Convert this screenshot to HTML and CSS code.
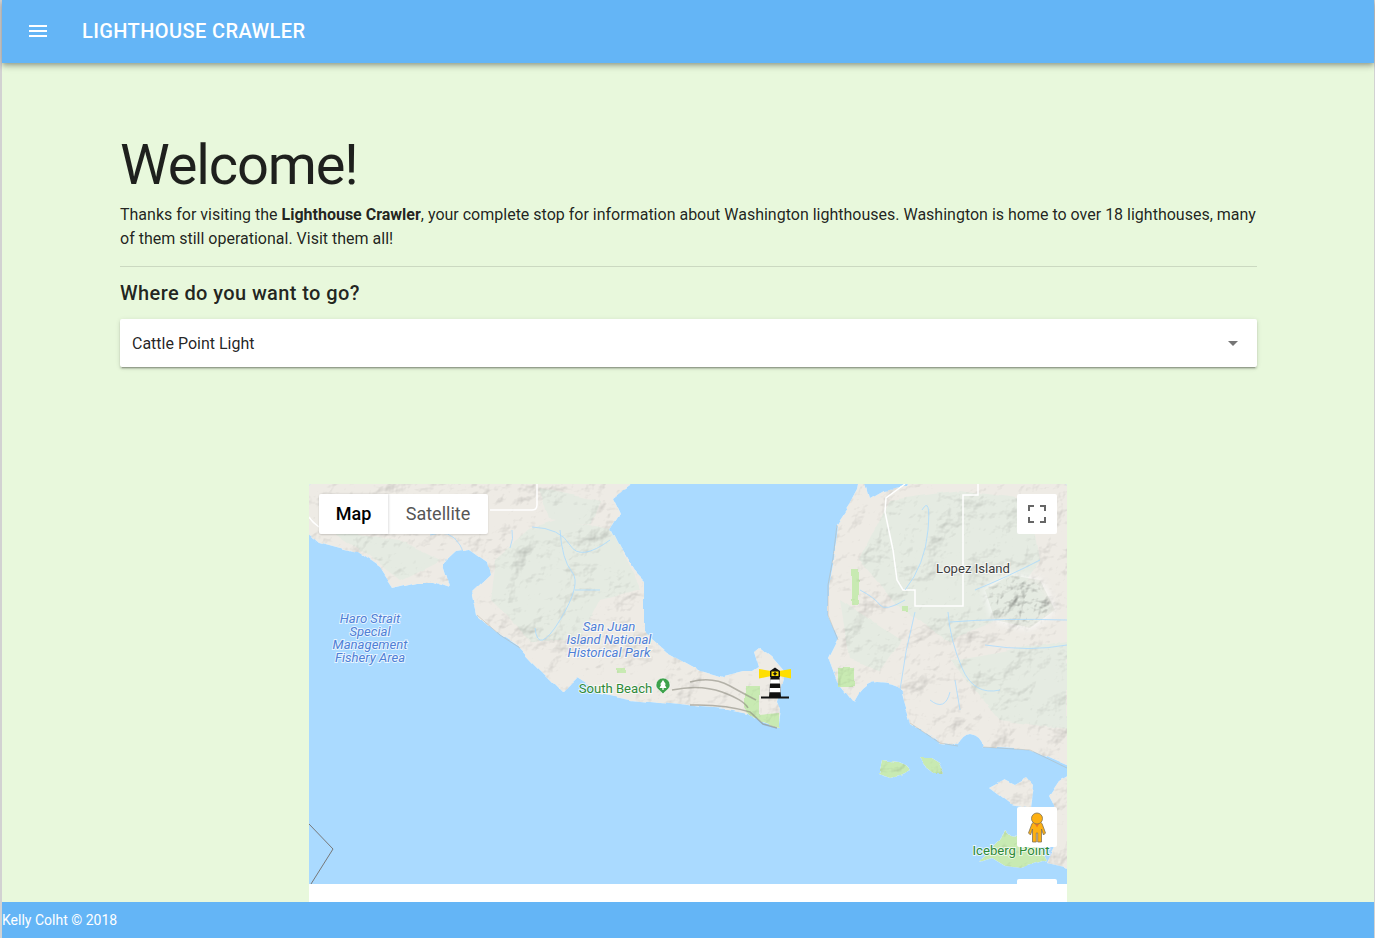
FILE: index.html
```html
<!DOCTYPE html>
<html lang="en">
  <head>
    <meta charset="UTF-8" />
    <meta name="viewport" content="width=device-width, initial-scale=1.0" />
    <title>Lighthouse Crawler</title>
    <link rel="stylesheet" href="styles.css">
  </head>
  <body>
    <div class="app">
      <header class="toolbar">
        <button class="menu-btn" type="button" aria-label="Menu">
          <svg viewBox="0 0 24 24" width="24" height="24"><path d="M3 18h18v-2H3v2zm0-5h18v-2H3v2zm0-7v2h18V6H3z" fill="#fff"/></svg>
        </button>
        <div class="toolbar-title">Lighthouse Crawler</div>
      </header>

      <main class="content">
        <h1>Welcome!</h1>
        <p class="intro">Thanks for visiting the <strong>Lighthouse Crawler</strong>, your complete stop for information about Washington lighthouses. Washington is home to over 18 lighthouses, many of them still operational. Visit them all!</p>
        <hr class="divider" />
        <h2>Where do you want to go?</h2>
        <div class="select-box">
          <span>Cattle Point Light</span>
          <svg viewBox="0 0 24 24" width="24" height="24"><path d="M7 10l5 5 5-5z" fill="#757575"/></svg>
        </div>

        <div class="map">
          <svg class="map-art" viewBox="309 484 758 400" width="758" height="400">
            <defs>
              <filter id="relief" x="-5%" y="-5%" width="110%" height="110%" color-interpolation-filters="sRGB">
                <feTurbulence type="fractalNoise" baseFrequency=".025" numOctaves="5" seed="11" result="noise"/>
                <feDisplacementMap in="SourceGraphic" in2="noise" scale="7" xChannelSelector="R" yChannelSelector="G" result="shape"/>
                <feDiffuseLighting in="noise" surfaceScale="2.6" diffuseConstant="1.12" lighting-color="#fff" result="light">
                  <feDistantLight azimuth="235" elevation="65"/>
                </feDiffuseLighting>
                <feBlend in="shape" in2="light" mode="multiply" result="lit"/>
                <feComposite in="lit" in2="shape" operator="in"/>
              </filter>
              <filter id="rugged" x="-20%" y="-20%" width="140%" height="140%" color-interpolation-filters="sRGB">
                <feTurbulence type="fractalNoise" baseFrequency=".06" numOctaves="4" seed="4" result="noise"/>
                <feDiffuseLighting in="noise" surfaceScale="3" diffuseConstant="1.1" lighting-color="#fff" result="light">
                  <feDistantLight azimuth="235" elevation="65"/>
                </feDiffuseLighting>
                <feBlend in="SourceGraphic" in2="light" mode="multiply" result="lit"/>
                <feGaussianBlur in="SourceGraphic" stdDeviation="5" result="soft"/>
                <feComposite in="lit" in2="soft" operator="in"/>
              </filter>
            </defs>

            <g filter="url(#relief)">
              <!-- san juan island -->
              <path class="land" d="M300 470L634 470L630 485L612 498L620 515L606 537L622 552L634 572L644 582L644 608L644 632L667 652L700 670L723 677L743 672L752 672L758 668L753 652L758 648L770 657L783 672L780 685L777 700L780 707L778 723L777 728L763 723L750 713L730 709L700 707L680 704L630 699L600 693L577 678L563 692L533 662L520 648L500 635L477 615L472 592L490 575L487 562L470 550L457 552L443 565L450 588L433 582L417 582L393 588L380 568L357 552L320 542L300 525Z"/>
              <path class="forest" d="M495 560L530 530L560 520L610 530L640 590L600 600L580 640L530 640L490 600Z"/>
              <path class="forest" d="M540 487L600 500L590 525L550 520Z"/>
              <path class="forest" d="M330 530L400 540L440 560L400 580L360 550Z"/>
              <path class="park" d="M746 686L760 686L760 714L778 712L778 728L763 723L750 713L746 706Z"/>
              <path class="park" d="M616 668h9v5h-9z"/>
              <!-- lopez island -->
              <path class="land" d="M862 470L858 490L850 505L837 525L833 558L828 585L828 615L838 638L828 658L837 682L853 702L857 695Q866 682 877 682Q892 682 900 688L903 700L910 723L940 743L958 745Q962 735 970 734Q982 736 983 747L1030 750L1080 772L1080 470L912 470L905 486L884 490L870 498L866 484Z"/>
              <path class="forest" d="M890 500L960 490L1030 500L1040 560L1000 620L950 640L900 610L860 560Z"/>
              <path class="forest" d="M840 600L900 640L880 670L850 660Z"/>
              <path class="forest" d="M950 660L1067 640L1067 730L1000 720Z"/>
              <path class="park" d="M852 571h8v35h-8z"/>
              <path class="park" d="M838 669h16v17h-16z"/>
              <path class="park" d="M900 606h7v6h-7z"/>
              <!-- small islands -->
              <path class="park" d="M882 760L898 762L905 765L910 770L900 775L890 777L879 773Z"/>
              <path class="park" d="M920 757L932 757L940 762L945 772L935 772L926 765Z"/>
              <!-- south east corner -->
              <path class="land" d="M990 788L1005 780L1015 785L1027 778L1033 785L1030 807L1010 803Z"/>
              <path class="land" d="M1080 770L1060 782L1050 797L1057 810L1058 835L1045 862L1080 870Z"/>
              <path class="park" d="M1005 828L1012 835L1030 838L1040 850L1045 860L1020 868L1005 866L992 858L980 862L985 855L1000 840Z"/>
            </g>

            <!-- steeper ground -->
            <g filter="url(#rugged)">
              <path class="forest" d="M985 590L1010 575L1040 580L1055 610L1030 628L995 620Z"/>
            </g>

            <!-- cliffs along the shore -->
            <path class="cliff" d="M672 690Q700 684 722 692T748 708"/>
            <path class="cliff" d="M690 682Q712 676 730 686T756 700"/>
            <path class="cliff" d="M690 705Q725 704 750 712L763 724L777 728"/>
            <path class="cliff faint" d="M837 525L833 558L828 585L828 615L838 640"/>
            <path class="cliff faint" d="M910 723L940 743L958 746M983 747L1030 750L1067 768"/>
            <path class="cliff faint" d="M520 648L500 635L477 615"/>

            <!-- park outlines -->
            <path class="boundary" d="M978 484V495H963V606H915V590H903L897 580L893 550L885 512L886 498L905 484"/>
            <path class="boundary" d="M537 484V505Q537 510 532 510H490"/>
            <path class="boundary" d="M309 517Q312 522 319 527"/>

            <!-- streams -->
            <path class="stream" d="M532 527Q560 528 570 545T610 540M560 530Q562 560 572 572T560 620T535 628M575 590H600"/>
            <path class="stream" d="M430 535Q450 528 460 545T445 560M510 548Q514 538 512 530"/>
            <path class="stream" d="M905 600Q885 612 880 605T860 590M905 590Q925 565 928 530T922 510M915 612Q905 650 900 690"/>
            <path class="stream" d="M948 612Q950 640 962 668T1000 690M950 622Q1000 618 1067 620M985 645Q1030 652 1067 645"/>
            <path class="stream" d="M930 700Q945 712 950 692M955 680L960 710"/>
            <path class="stream" d="M975 590Q1005 578 1040 560"/>

            <!-- water border -->
            <path class="water-line" d="M309 824L333 849L311 884"/>

            <!-- labels -->
            <text class="label water-label" x="370" y="623">Haro Strait</text>
            <text class="label water-label" x="370" y="636">Special</text>
            <text class="label water-label" x="370" y="649">Management</text>
            <text class="label water-label" x="370" y="662">Fishery Area</text>
            <text class="label water-label" x="609" y="631">San Juan</text>
            <text class="label water-label" x="609" y="644">Island National</text>
            <text class="label water-label" x="609" y="657">Historical Park</text>
            <text class="label place-label" x="973" y="573">Lopez Island</text>
            <text class="label park-label" x="615.500" y="693">South Beach</text>
            <text class="label park-label" x="1011" y="855">Iceberg Point</text>

            <!-- south beach pin -->
            <path d="M663 694C660.500 690.500 656 689 656 685A7 7 0 0 1 670 685C670 689 665.500 690.500 663 694Z" fill="#3da14b" stroke="#fff" stroke-width=".6"/>
            <path d="M663 680L666 684.500H664.700L666.500 688H663.600V690H662.400V688H659.500L661.300 684.500H660Z" fill="#fff"/>

            <!-- lighthouse marker -->
            <path d="M759 669L771 671V676L759 678.500Z" fill="#ffdf00"/>
            <path d="M791 669L779 671V676L791 678.500Z" fill="#ffdf00"/>
            <path d="M775 667.500L780 671V677H770V671Z" fill="#111"/>
            <path d="M771.500 671.500H778.500V676H771.500Z" fill="#ffdf00"/>
            <path d="M775 671.500L776 673L777.500 673.700L776 674.500L775 676L774 674.500L772.500 673.700L774 673Z" fill="#111"/>
            <path d="M770.500 677H779.500L781 697H769Z" fill="#111"/>
            <path d="M770.300 679.500H779.700L780 683.500H770Z" fill="#fff"/>
            <path d="M769.700 688H780.300L780.600 692.300H769.400Z" fill="#fff"/>
            <path d="M761 696.500H789V698.500H761Z" fill="#111"/>
          </svg>

          <div class="map-type">
            <div class="map-type-btn active">Map</div>
            <div class="map-type-btn">Satellite</div>
          </div>
          <div class="map-ctrl fullscreen">
            <svg viewBox="0 0 18 18" width="18" height="18"><path d="M0 6V0H6V2H2V6ZM12 0H18V6H16V2H12ZM18 12V18H12V16H16V12ZM6 18H0V12H2V16H6Z" fill="#666"/></svg>
          </div>
          <div class="map-ctrl pegman">
            <svg viewBox="-20 -20 40 40" width="40" height="40">
              <path d="M-8.500 6L-5 -3.500Q-4 -5 -2 -5H2Q4 -5 5 -3.500L8.500 6L6.500 8L4.500 2V15H.7V6H-.7V15H-4.500V2L-6.500 8Z" fill="#fdb012" stroke="#7f7258" stroke-width=".8"/>
              <path d="M-3 -4.500H3L0 .5Z" fill="#ee7a22"/>
              <circle cy="-8.500" r="5.500" fill="#fdb012" stroke="#7f7258" stroke-width=".8"/>
            </svg>
          </div>
          <div class="map-ctrl zoom"></div>
        </div>
      </main>

      <footer class="footer">Kelly Colht © 2018</footer>
    </div>
  </body>
</html>
```

FILE: styles.css
```css
html,
body {
  height: 100%;
}

body {
  margin: 0;
  font-family: Roboto, sans-serif;
  font-size: 16px;
  line-height: 24px;
  color: rgba(0, 0, 0, 0.87);
  background-color: #d2d2d2;
  overflow: hidden;
}

.app {
  display: flex;
  flex-direction: column;
  height: 100%;
  margin: 0 1px 0 2px;
  background-color: #e8f8dc;
}

.toolbar {
  display: flex;
  align-items: center;
  flex: none;
  box-sizing: border-box;
  height: 63px;
  padding-bottom: 1px;
  position: relative;
  z-index: 2;
  background-color: #64b5f6;
  box-shadow: 0 2px 4px -1px rgba(0, 0, 0, 0.2), 0 4px 5px 0 rgba(0, 0, 0, 0.14), 0 1px 10px 0 rgba(0, 0, 0, 0.12);
}

.menu-btn {
  display: flex;
  width: 24px;
  height: 24px;
  margin-left: 24px;
  padding: 0;
  border: none;
  background: none;
}

.toolbar-title {
  margin-left: 32px;
  font-size: 20px;
  font-weight: 500;
  letter-spacing: 0.02em;
  color: #fff;
  text-transform: uppercase;
}

.content {
  flex: 1;
  min-height: 0;
  overflow: hidden;
  padding: 66px 117px 0 118px;
}

h1 {
  margin: 0;
  font-size: 56px;
  font-weight: 400;
  line-height: 72px;
  letter-spacing: -0.02em;
}

.intro {
  margin: 2px 0 16px;
}

.divider {
  height: 1px;
  margin: -1px 0 0;
  border: none;
  background-color: rgba(0, 0, 0, 0.12);
}

h2 {
  margin: 12px 0 12px;
  font-size: 20px;
  font-weight: 500;
  line-height: 28px;
  letter-spacing: 0.02em;
}

.select-box {
  display: flex;
  align-items: center;
  justify-content: space-between;
  height: 48px;
  padding: 0 12px;
  border-radius: 2px;
  background-color: #fff;
  box-shadow: 0 3px 1px -2px rgba(0, 0, 0, 0.2), 0 2px 2px 0 rgba(0, 0, 0, 0.14), 0 1px 5px 0 rgba(0, 0, 0, 0.12);
}

.select-box span {
  margin-top: 2px;
}

.map {
  position: relative;
  width: 758px;
  height: 480px;
  margin: 117px 0 0 189px;
  overflow: hidden;
  border-radius: 2px 2px 0 0;
  background-color: #fff;
}

.map-art {
  display: block;
  background-color: #aadaff;
}

.land {
  fill: #eeebe5;
}

.forest {
  fill: #e5ebe2;
}

.park {
  fill: #c8eab2;
}

.cliff {
  fill: none;
  stroke: #8c8a7e;
  stroke-width: 1.5;
  stroke-opacity: 0.6;
}

.cliff.faint {
  stroke: #b5b3a8;
  stroke-width: 0.8;
}

.boundary {
  fill: none;
  stroke: #fff;
  stroke-width: 1.5;
}

.stream {
  fill: none;
  stroke: #aadaff;
  stroke-width: 0.8;
}

.water-line {
  fill: none;
  stroke: #777;
  stroke-width: 1;
}

.label {
  font-family: Roboto, sans-serif;
  font-size: 13.1px;
  text-anchor: middle;
  paint-order: stroke;
  stroke: #fff;
  stroke-width: 2px;
  stroke-opacity: 0.7;
}

.water-label {
  font-style: italic;
  fill: #4f7fd6;
}

.place-label {
  fill: #3c3c3c;
}

.park-label {
  fill: #2f8a38;
}

.map-type {
  display: flex;
  position: absolute;
  top: 10px;
  left: 10px;
  height: 40px;
  border-radius: 2px;
  background-color: #fff;
  box-shadow: 0 1px 2px rgba(0, 0, 0, 0.12);
}

.map-type-btn {
  display: flex;
  align-items: center;
  justify-content: center;
  width: 100px;
  font-size: 18px;
  color: #565656;
}

.map-type-btn.active {
  width: 69px;
  font-weight: 500;
  color: #000;
  box-shadow: 1px 0 2px rgba(0, 0, 0, 0.12);
}

.map-ctrl {
  display: flex;
  align-items: center;
  justify-content: center;
  position: absolute;
  left: 708px;
  width: 40px;
  height: 40px;
  border-radius: 2px;
  background-color: #fff;
}

.fullscreen {
  top: 10px;
}

.pegman {
  top: 323px;
}

.zoom {
  top: 395px;
}

.footer {
  flex: none;
  height: 36px;
  position: relative;
  z-index: 2;
  font-size: 14px;
  line-height: 36px;
  color: #fff;
  background-color: #64b5f6;
}
```
